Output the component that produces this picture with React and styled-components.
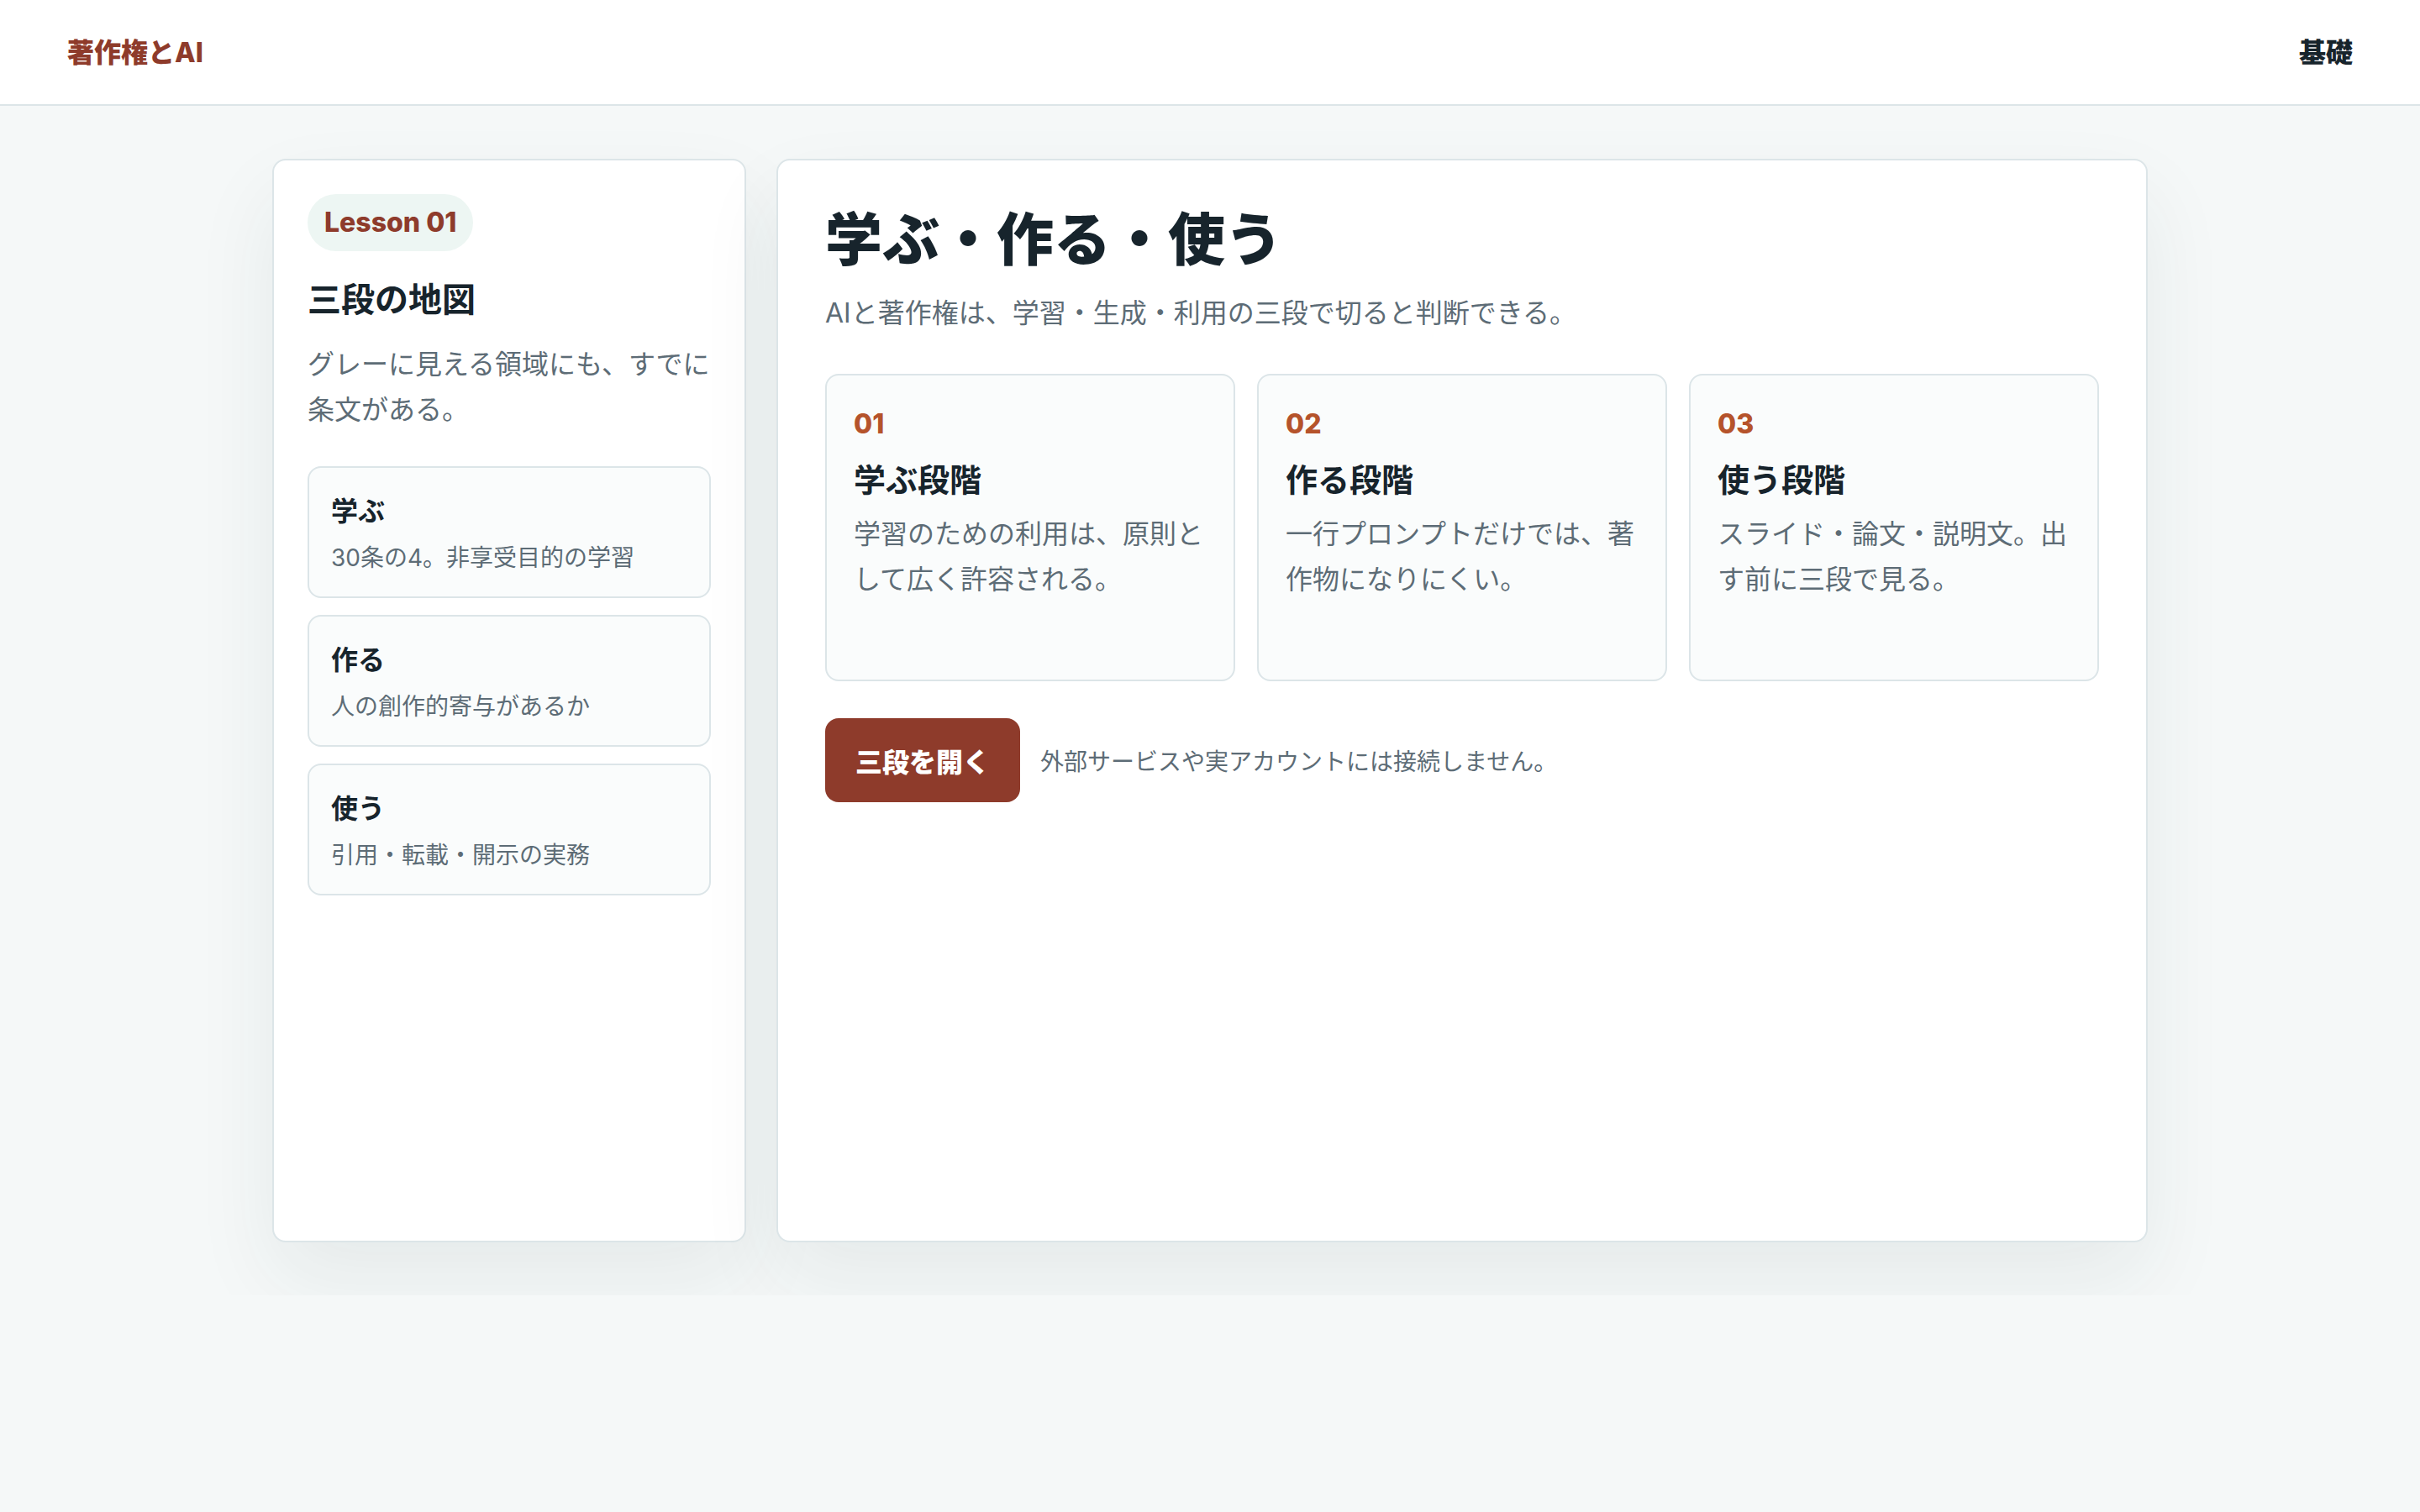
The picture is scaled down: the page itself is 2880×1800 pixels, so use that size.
import React from "react";
import styled, { createGlobalStyle } from "styled-components";

const GlobalStyle = createGlobalStyle`
    * {
        box-sizing: border-box;
    }
    body {
        margin: 0;
        background: #f5f8f8;
        color: #17242c;
        font-family: Inter, "Noto Sans CJK JP", sans-serif;
    }
`

const Header = styled.header`
    height: 126px;
    padding: 0 80px 4px;
    display: flex;
    align-items: center;
    justify-content: space-between;
    background: #ffffff;
    border-bottom: 2px solid #dce5e8;
`

const Logo = styled.div`
    font-size: 32px;
    font-weight: 800;
    color: #8e3b2b;
`

const NavLink = styled.div`
    font-size: 32px;
    font-weight: 800;
    color: #17242c;
`

const Layout = styled.main`
    max-width: 2232px;
    margin: 0 auto;
    padding: 63px 0;
    display: grid;
    grid-template-columns: 564px 1fr;
    gap: 36px;
`

const Panel = styled.section`
    min-height: 1290px;
    padding: ${props => props.$pad};
    background: #ffffff;
    border: 2px solid #dce5e8;
    border-radius: 16px;
    box-shadow: 0 44px 100px rgba(30, 50, 55, 0.07);
`

const Badge = styled.span`
    display: inline-block;
    padding: 10px 20px;
    border-radius: 999px;
    background: #edf6f3;
    color: #8e3b2b;
    font-size: 32px;
    font-weight: 800;
    line-height: 48px;
`

const SideTitle = styled.h2`
    margin: 30px 0 0;
    font-size: 40px;
    font-weight: 700;
    line-height: 56px;
`

const Lead = styled.p`
    margin: 22px 0 0;
    font-size: 32px;
    line-height: 54px;
    color: #5d6c76;
`

const StepList = styled.div`
    margin-top: 40px;
    display: flex;
    flex-direction: column;
    gap: 20px;
`

const StepItem = styled.div`
    padding: 28px 26px 25px;
    background: #fafcfc;
    border: 2px solid #dce5e8;
    border-radius: 16px;
`

const StepName = styled.div`
    font-size: 32px;
    font-weight: 700;
    line-height: 48px;
`

const StepNote = styled.div`
    margin-top: 10px;
    font-size: 28px;
    line-height: 42px;
    color: #5d6c76;
`

const Title = styled.h1`
    margin: 0;
    font-size: 68px;
    font-weight: 800;
    line-height: 84px;
`

const Subtitle = styled.p`
    margin: 22px 0 0;
    font-size: 32px;
    line-height: 48px;
    color: #5d6c76;
`

const Stages = styled.div`
    margin-top: 48px;
    display: grid;
    grid-template-columns: repeat(3, 1fr);
    gap: 26px;
`

const Stage = styled.article`
    min-height: 366px;
    padding: 34px 32px 32px;
    background: #fafcfc;
    border: 2px solid #dce5e8;
    border-radius: 16px;
`

const Num = styled.div`
    font-size: 32px;
    font-weight: 800;
    line-height: 48px;
    color: #b5532b;
`

const StageTitle = styled.h3`
    margin: 15px 0 0;
    font-size: 38px;
    font-weight: 700;
    line-height: 54px;
`

const StageText = styled.p`
    margin: 11px 0 0;
    font-size: 32px;
    line-height: 54px;
    color: #5d6c76;
`

const Actions = styled.div`
    margin-top: 44px;
    display: flex;
    align-items: center;
    gap: 24px;
`

const Button = styled.button`
    height: 100px;
    padding: 0 36px;
    border: 0;
    border-radius: 16px;
    background: #8e3b2b;
    color: #ffffff;
    font-family: inherit;
    font-size: 32px;
    font-weight: 800;
    cursor: pointer;
`

const Hint = styled.span`
    font-size: 28px;
    color: #5d6c76;
`

const steps = [
    { name: "学ぶ", note: "30条の4。非享受目的の学習" },
    { name: "作る", note: "人の創作的寄与があるか" },
    { name: "使う", note: "引用・転載・開示の実務" },
]

const stages = [
    { num: "01", title: "学ぶ段階", text: "学習のための利用は、原則として広く許容される。" },
    { num: "02", title: "作る段階", text: "一行プロンプトだけでは、著作物になりにくい。" },
    { num: "03", title: "使う段階", text: "スライド・論文・説明文。出す前に三段で見る。" },
]

export default function App() {
    return (
        <>
            <GlobalStyle />
            <Header>
                <Logo>著作権とAI</Logo>
                <NavLink>基礎</NavLink>
            </Header>
            <Layout>
                <Panel $pad="40px">
                    <Badge>Lesson 01</Badge>
                    <SideTitle>三段の地図</SideTitle>
                    <Lead>グレーに見える領域にも、すでに条文がある。</Lead>
                    <StepList>
                        {steps.map(step => (
                            <StepItem key={step.name}>
                                <StepName>{step.name}</StepName>
                                <StepNote>{step.note}</StepNote>
                            </StepItem>
                        ))}
                    </StepList>
                </Panel>
                <Panel $pad="52px 56px 56px">
                    <Title>学ぶ・作る・使う</Title>
                    <Subtitle>AIと著作権は、学習・生成・利用の三段で切ると判断できる。</Subtitle>
                    <Stages>
                        {stages.map(stage => (
                            <Stage key={stage.num}>
                                <Num>{stage.num}</Num>
                                <StageTitle>{stage.title}</StageTitle>
                                <StageText>{stage.text}</StageText>
                            </Stage>
                        ))}
                    </Stages>
                    <Actions>
                        <Button>三段を開く</Button>
                        <Hint>外部サービスや実アカウントには接続しません。</Hint>
                    </Actions>
                </Panel>
            </Layout>
        </>
    )
}
